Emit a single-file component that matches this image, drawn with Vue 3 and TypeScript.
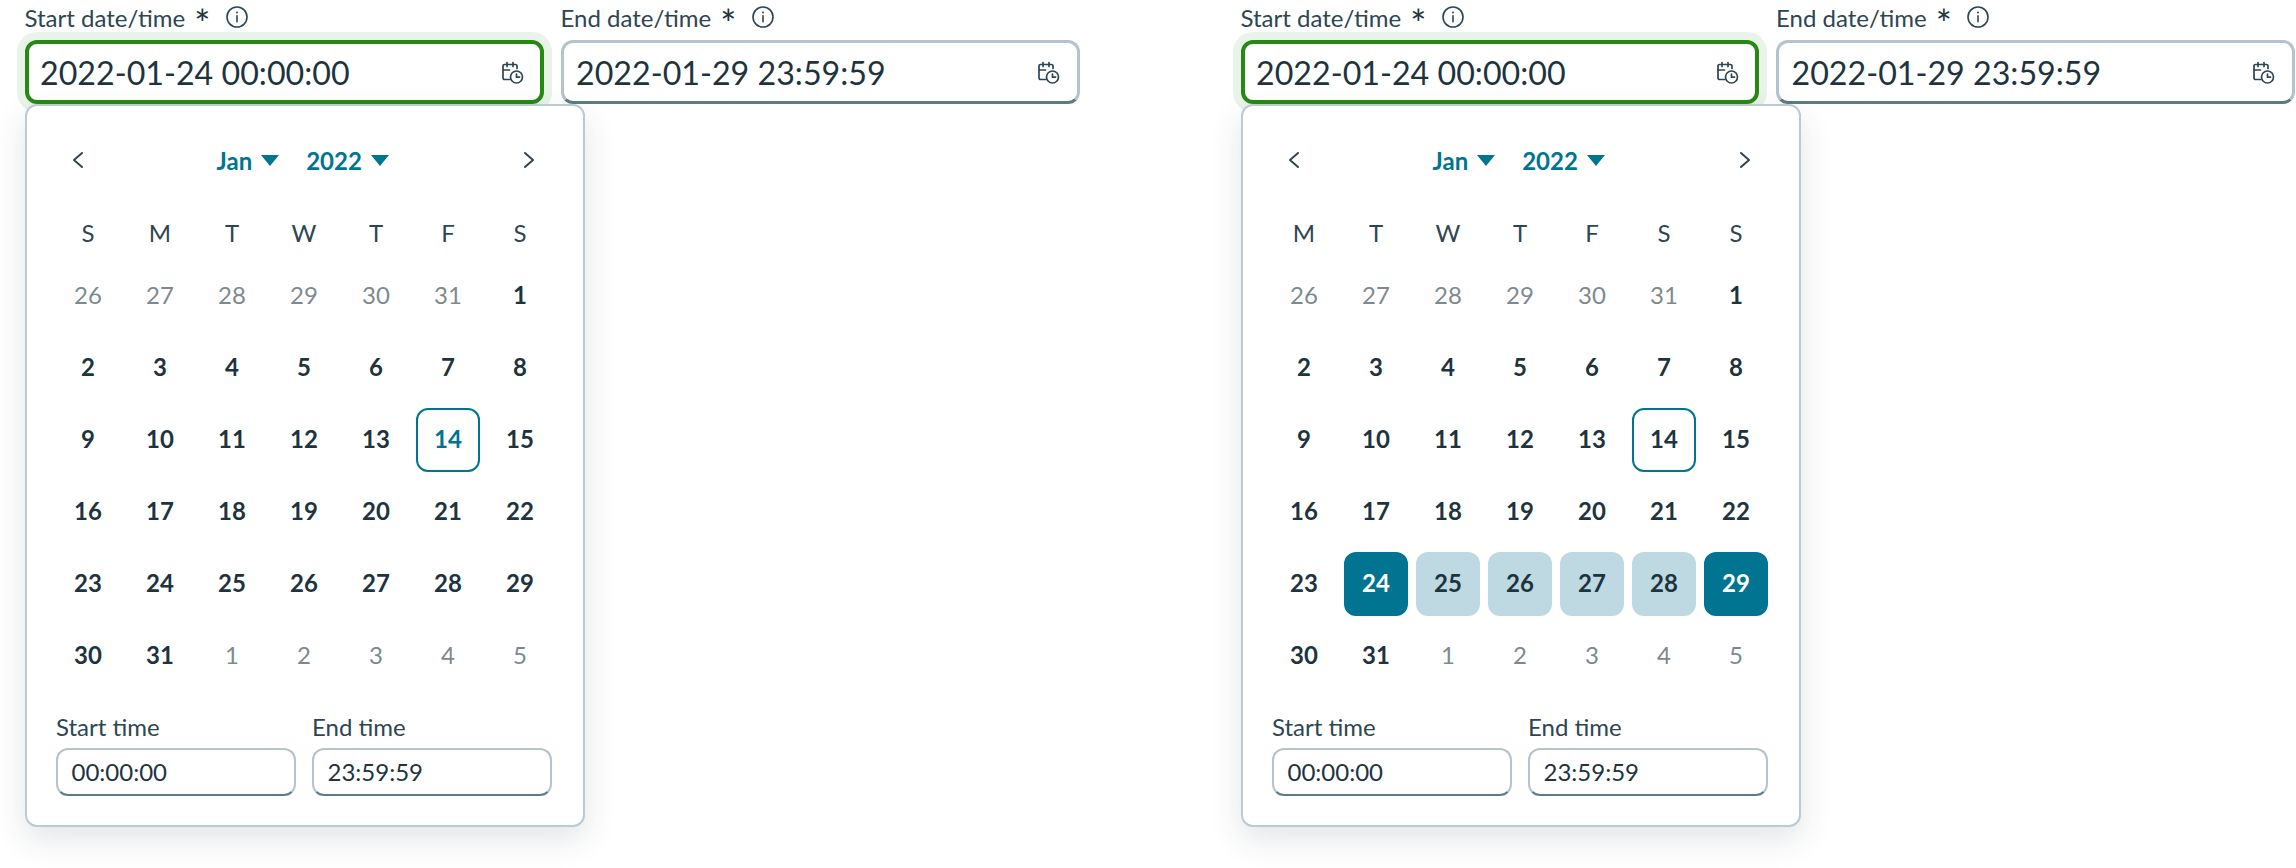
<script setup lang="ts">
interface Day { n: number; muted?: boolean; today?: boolean; sel?: boolean; range?: boolean }

function buildDays(leading: number[], selected: boolean): Day[] {
  const days: Day[] = leading.map((n) => ({ n, muted: true }))
  for (let n = 1; n <= 31; n++) {
    days.push({
      n,
      today: n === 14,
      sel: selected && (n === 24 || n === 29),
      range: selected && n > 24 && n < 29,
    })
  }
  let t = 1
  while (days.length < 42) days.push({ n: t++, muted: true })
  return days
}

const pickers = [
  {
    cls: 'first',
    weekdays: ['S', 'M', 'T', 'W', 'T', 'F', 'S'],
    days: buildDays([26, 27, 28, 29, 30, 31], false),
  },
  {
    cls: 'second',
    weekdays: ['M', 'T', 'W', 'T', 'F', 'S', 'S'],
    days: buildDays([26, 27, 28, 29, 30, 31], true),
  },
]
</script>

<template>
  <div class="page">
    <section v-for="p in pickers" :key="p.cls" class="picker" :class="p.cls">
      <div class="fields">
        <div class="field">
          <div class="label">
            <span>Start date/time</span><span class="star">*</span>
            <svg class="info" viewBox="0 0 24 24" fill="none" stroke="currentColor" stroke-width="1.6">
              <circle cx="12" cy="12" r="10" />
              <path d="M12 10.8v6" stroke-linecap="round" />
              <circle cx="12" cy="7.6" r="1" fill="currentColor" stroke="none" />
            </svg>
          </div>
          <div class="input focus">
            <span>2022-01-24 00:00:00</span>
            <svg class="cal" viewBox="0 0 24 24" fill="none" stroke="currentColor" stroke-width="1.7" stroke-linecap="round" stroke-linejoin="round">
              <path d="M9.5 19.500H4.600A1.600 1.600 0 0 1 3 17.900V6.100A1.600 1.600 0 0 1 4.600 4.500h10.800A1.600 1.600 0 0 1 17 6.100V8.500" />
              <path d="M7 2.500v4M13 2.500v4M3 10h6.500" />
              <circle cx="16.500" cy="17" r="6" />
              <path d="M16.500 14v3.200h3" />
            </svg>
          </div>
        </div>
        <div class="field">
          <div class="label">
            <span>End date/time</span><span class="star">*</span>
            <svg class="info" viewBox="0 0 24 24" fill="none" stroke="currentColor" stroke-width="1.6">
              <circle cx="12" cy="12" r="10" />
              <path d="M12 10.8v6" stroke-linecap="round" />
              <circle cx="12" cy="7.6" r="1" fill="currentColor" stroke="none" />
            </svg>
          </div>
          <div class="input">
            <span>2022-01-29 23:59:59</span>
            <svg class="cal" viewBox="0 0 24 24" fill="none" stroke="currentColor" stroke-width="1.7" stroke-linecap="round" stroke-linejoin="round">
              <path d="M9.5 19.500H4.600A1.600 1.600 0 0 1 3 17.900V6.100A1.600 1.600 0 0 1 4.600 4.500h10.800A1.600 1.600 0 0 1 17 6.100V8.500" />
              <path d="M7 2.500v4M13 2.500v4M3 10h6.500" />
              <circle cx="16.500" cy="17" r="6" />
              <path d="M16.500 14v3.200h3" />
            </svg>
          </div>
        </div>
      </div>

      <div class="popup">
        <div class="nav">
          <svg class="chev" viewBox="0 0 16 24" fill="none" stroke="currentColor" stroke-width="2" stroke-linecap="round" stroke-linejoin="round">
            <path d="M13 5 5 12l8 7" />
          </svg>
          <div class="selects">
            <span class="sel">Jan<i class="caret"></i></span>
            <span class="sel">2022<i class="caret"></i></span>
          </div>
          <svg class="chev" viewBox="0 0 16 24" fill="none" stroke="currentColor" stroke-width="2" stroke-linecap="round" stroke-linejoin="round">
            <path d="M3 5l8 7-8 7" />
          </svg>
        </div>

        <div class="grid heads">
          <div v-for="(w, i) in p.weekdays" :key="i" class="head">{{ w }}</div>
        </div>
        <div class="grid days">
          <div
            v-for="(d, i) in p.days"
            :key="i"
            class="day"
            :class="{ muted: d.muted, today: d.today, selected: d.sel, range: d.range }"
          >{{ d.n }}</div>
        </div>

        <div class="times">
          <div class="time">
            <div class="time-label">Start time</div>
            <div class="time-input">00:00:00</div>
          </div>
          <div class="time">
            <div class="time-label">End time</div>
            <div class="time-input">23:59:59</div>
          </div>
        </div>
      </div>
    </section>
  </div>
</template>

<style>
html, body { margin: 0; background: #fff; }
</style>

<style scoped>
.page {
  display: flex;
  gap: 162px;
  padding-left: 24.5px;
  height: 868px;
  box-sizing: border-box;
  overflow: hidden;
  font-family: Lato, sans-serif;
  color: #1d343f;
}
.picker { width: 1054px; flex: none; }
.fields { display: flex; gap: 17px; }
.field { width: 519px; flex: none; }
.second .field { width: 518.500px; }
.label {
  height: 40px;
  display: flex;
  align-items: flex-start;
  font-size: 24px;
  line-height: 36px;
  color: #2d4653;
}
.star {
  display: block;
  width: 14px;
  margin-left: 9px;
  font-size: 38px;
  line-height: 47px;
  text-align: center;
  color: #1d343f;
}
.info { width: 24px; height: 24px; margin-left: 16.500px; margin-top: 4.500px; color: #2d4653; flex: none; }
.input {
  height: 64px;
  box-sizing: border-box;
  display: flex;
  align-items: center;
  justify-content: space-between;
  padding: 0 17px 0 12.500px;
  border: 3px solid #b3c4cc;
  border-bottom-color: #5f7a85;
  border-radius: 12px;
  font-size: 32.200px;
  color: #1d343f;
  background: #fff;
}
.input.focus {
  border: 4px solid #268a12;
  padding-left: 11.500px;
  padding-right: 16px;
  box-shadow: 0 0 0 8px #e9f3e9;
}
.cal { width: 24px; height: 24px; color: #2d4653; }
.popup {
  position: relative;
  width: 560px;
  height: 723px;
  box-sizing: border-box;
  padding: 0 29.500px;
  border: 2px solid #bccad1;
  border-radius: 12px;
  background: #fff;
  box-shadow: 0 12px 32px rgba(30, 50, 60, 0.13);
}
.nav {
  height: 108px;
  width: 496px;
  box-sizing: border-box;
  display: flex;
  align-items: center;
  justify-content: space-between;
  padding: 0 14.500px 0 13px;
  color: #2d4653;
}
.chev { width: 16px; height: 24px; }
.selects { display: flex; gap: 27px; margin-right: 1px; }
.sel {
  display: flex;
  align-items: center;
  gap: 9px;
  font-size: 24px;
  font-weight: 700;
  color: #007490;
}
.caret {
  width: 0;
  height: 0;
  border-left: 9px solid transparent;
  border-right: 9px solid transparent;
  border-top: 11px solid #007490;
}
.grid {
  display: grid;
  grid-template-columns: repeat(7, 64px);
  column-gap: 8px;
}
.heads { height: 36px; align-items: center; margin-bottom: 14px; }
.head { text-align: center; font-size: 24px; color: #2d4653; }
.days { row-gap: 8px; grid-auto-rows: 64px; }
.day {
  display: flex;
  align-items: center;
  justify-content: center;
  box-sizing: border-box;
  padding-bottom: 3px;
  border-radius: 12px;
  font-size: 24px;
  font-weight: 700;
  color: #1d343f;
}
.day.muted { font-weight: 400; color: #7c8a90; }
.day.today { border: 2px solid #007490; }
.first .day.today { color: #007490; }
.day.range { background: #bed9e2; }
.day.selected { background: #007490; color: #fff; }
.times {
  display: grid;
  grid-template-columns: 240px 240px;
  column-gap: 16px;
  margin-top: 22px;
}
.time-label { font-size: 24px; line-height: 34px; color: #2d4653; margin-bottom: 4px; }
.time-input {
  height: 48px;
  box-sizing: border-box;
  display: flex;
  align-items: center;
  padding: 0 0 2px 13.500px;
  border: 2.500px solid #b3c4cc;
  border-bottom-color: #5f7a85;
  border-radius: 12px;
  font-size: 24px;
  color: #1d343f;
}
</style>
